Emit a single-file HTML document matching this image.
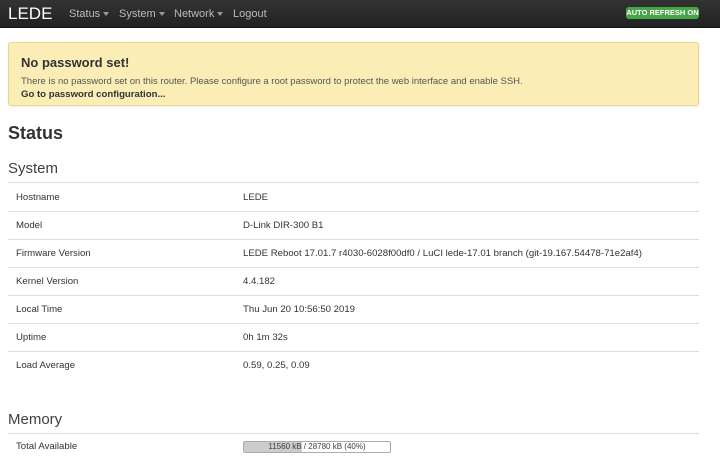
<!DOCTYPE html>
<html><head><style>
*{box-sizing:border-box;margin:0;padding:0}
body{width:720px;height:448px;overflow:hidden;background:#fff;font-family:"Liberation Sans",sans-serif;color:#404040;position:relative}
.nav{height:28px;background:linear-gradient(#333,#222);position:relative;border-bottom:1px solid #111}
.nav .brand{position:absolute;left:8px;top:4px;font-size:17px;color:#fff}
.nav .m{position:absolute;top:8px;font-size:11px;color:#bbb}
.caret{display:inline-block;border-top:4px solid #999;border-left:3px solid transparent;border-right:3px solid transparent;vertical-align:middle;margin-left:3px}
.ar{position:absolute;left:626px;top:7px;width:73px;height:12px;background:#46a546;color:#fff;font-size:7.5px;font-weight:bold;line-height:12px;text-align:center;border-radius:3px}
.alert{position:absolute;left:8px;top:42px;width:691px;height:64px;background:#fbedb6;border:1px solid #e9d690;border-radius:3px;box-shadow:0 1px 2px rgba(0,0,0,.08)}
.alert h4{position:absolute;left:12px;top:12px;font-size:13px;color:#333}
.alert p{position:absolute;left:12px;top:33px;font-size:9.5px;color:#555}
.alert b{position:absolute;left:12px;top:46px;font-size:9.6px;color:#333}
h2{position:absolute;left:8px;top:123px;font-size:18px;font-weight:bold;color:#333}
h3{position:absolute;left:8px;font-size:15px;font-weight:normal;color:#404040;width:691px;border-bottom:1px solid #ddd;padding-bottom:5px}
.row{position:absolute;left:8px;width:691px;height:28px;border-top:1px solid #ddd;font-size:9.6px;color:#333}
.row span{position:absolute;top:8px}
.row .a{left:8px}.row .b{left:235px}
.bar{position:absolute;left:243px;top:441px;width:148px;height:12px;border:1px solid #aaa;border-radius:2px;background:#fff;font-size:8px;text-align:center}
.bar div{position:absolute;left:0;top:0;bottom:0;width:40%;background:#ccc}
</style></head><body>
<div class="nav">
<span class="brand">LEDE</span>
<span class="m" style="left:69px">Status<i class="caret"></i></span>
<span class="m" style="left:119px">System<i class="caret"></i></span>
<span class="m" style="left:174px">Network<i class="caret"></i></span>
<span class="m" style="left:233px">Logout</span>
<div class="ar">AUTO REFRESH ON</div>
</div>
<div class="alert"><h4>No password set!</h4><p>There is no password set on this router. Please configure a root password to protect the web interface and enable SSH.</p><b>Go to password configuration...</b></div>
<h2>Status</h2>
<h3 style="top:160px">System</h3>
<div class="row" style="top:183px;border-top:none"><span class="a" style="top:9px">Hostname</span><span class="b" style="top:9px">LEDE</span></div>
<div class="row" style="top:211px"><span class="a">Model</span><span class="b">D-Link DIR-300 B1</span></div>
<div class="row" style="top:239px"><span class="a">Firmware Version</span><span class="b">LEDE Reboot 17.01.7 r4030-6028f00df0 / LuCI lede-17.01 branch (git-19.167.54478-71e2af4)</span></div>
<div class="row" style="top:267px"><span class="a">Kernel Version</span><span class="b">4.4.182</span></div>
<div class="row" style="top:295px"><span class="a">Local Time</span><span class="b">Thu Jun 20 10:56:50 2019</span></div>
<div class="row" style="top:323px"><span class="a">Uptime</span><span class="b">0h 1m 32s</span></div>
<div class="row" style="top:351px"><span class="a">Load Average</span><span class="b">0.59, 0.25, 0.09</span></div>
<h3 style="top:411px">Memory</h3>
<div class="row" style="top:436px;border-top:none"><span class="a" style="top:5px">Total Available</span></div>
<div class="bar"><div></div><span style="position:relative">11560 kB / 28780 kB (40%)</span></div>
</body></html>
